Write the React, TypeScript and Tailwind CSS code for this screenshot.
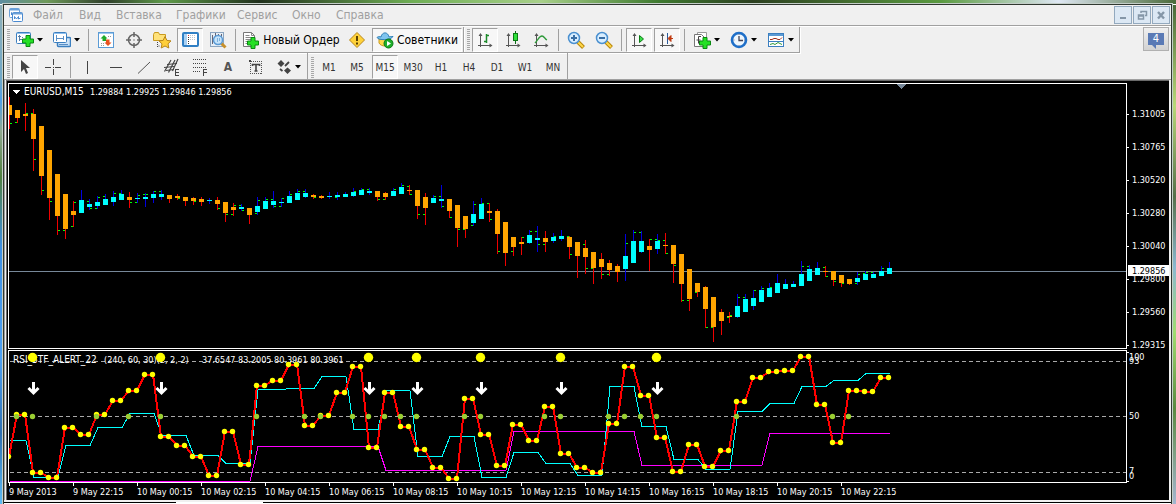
import type { ReactNode } from 'react';
import clsx from 'clsx';

const STEP = 8;

type Candle = {
  up: boolean;
  high: number;
  top: number;
  bottom: number;
  low: number;
  open?: number;
  close?: number;
};

// direction, high, body top, body bottom, low, open tick, close tick
const CANDLE_ROWS = `
d 13 21 31 45 - 39|d 26 26 34 39 38 -|d 19 30 32 47 - 29|d 25 30 55 87 29 75|d 42 42 92 111 - 106
d 66 66 114 136 - 117|d 90 90 132 151 - 146|d 110 110 145 155 146 -|d 117 127 131 143 142 118|u 106 116 129 129 - -
u 115 120 123 126 117 124|u 112 118 122 125 124 113|u 110 115 121 121 112 -|u 107 113 118 122 - 109|u 106 110 116 116 109 -
d 108 113 116 124 - 118|u 109 114 115 119 118 111|u 109 113 115 123 110 110|u 107 110 114 119 - 107|u 106 110 113 116 107 -
d 111 111 115 119 - -|d 110 112 114 116 - 114|d 113 113 117 122 - -|d 113 114 117 121 - 117|d 113 115 118 122 - -
u 114 116 117 120 - -|d 113 116 120 126 - 124|d 118 118 129 138 - 130|d 119 123 126 132 130 121|u 120 123 125 127 121 126
d 124 124 131 140 - -|u 113 122 128 131 129 116|u 113 117 125 125 - 115|u 107 117 121 124 115 122|u 114 118 119 123 122 114
u 107 112 119 119 - 110|u 105 109 116 116 - 107|u 105 109 113 114 107 -|d 110 111 113 115 - 113|d 111 112 114 115 - -
u 108 112 113 115 - -|u 108 111 113 116 113 -|u 108 110 113 113 - -|u 104 108 112 113 - 107|u 104 106 111 111 - 105
u 104 107 109 111 105 -|d 107 107 113 117 - 115|d 108 109 113 116 115 -|u 104 107 112 112 - 105|u 99 103 110 110 - 101
d 101 106 107 111 102 110|d 106 106 122 135 - 130|d 109 113 124 141 130 -|u 111 114 119 119 - 112|u 101 115 117 124 112 122
d 115 115 127 134 - 133|d 121 121 144 163 - 145|d 132 132 145 154 145 -|u 117 130 139 142 141 120|u 114 120 135 135 - 119
d 119 127 129 138 119 135|d 125 127 150 170 - 167|d 138 138 169 182 - -|d 153 153 163 172 167 -|d 153 158 160 171 - 153
u 146 151 159 160 - 147|u 142 154 156 168 147 160|d 147 154 158 168 160 -|u 149 153 157 159 - 152|u 146 152 155 157 - -
d 152 153 163 175 152 170|d 158 158 172 194 - -|d 156 164 173 190 160 184|d 168 168 184 200 184 -|d 169 175 183 195 - 190
d 176 179 186 192 190 -|d 180 182 188 198 - -|u 150 172 185 197 - 159|u 146 157 179 179 - 148|u 147 157 168 169 148 -
d 155 162 166 187 - 155|u 150 157 165 170 155 156|d 149 161 162 170 156 169|d 161 161 180 199 - 181|d 170 170 200 218 - 216
d 185 185 215 227 216 -|d 199 199 208 213 208 -|d 202 203 225 244 - 243|d 213 213 243 258 243 -|d 225 228 237 251 - -
d 228 232 233 239 233 231|u 210 222 233 234 - 213|u 210 215 228 228 213 -|u 206 214 222 226 - 206|u 202 206 218 218 - 204
u 199 204 213 213 - 203|u 190 199 209 209 - -|u 195 200 205 205 - -|u 197 200 203 203 - -|u 177 190 202 202 - 182
u 181 185 197 197 182 -|u 178 184 191 191 - -|d 182 187 188 193 183 192|d 187 187 196 202 - 197|d 191 191 199 203 - 199
d 195 195 200 201 - -|u 188 194 198 201 199 190|u 187 190 196 196 189 188|u 188 190 194 194 188 -|u 182 187 192 192 - 184
u 178 184 190 190 - -`;

const candles: Candle[] = CANDLE_ROWS.trim()
  .split(/[|\n]/)
  .map((row) => {
    const [dir, high, top, bottom, low, open, close] = row.trim().split(' ');
    return {
      up: dir === 'u',
      high: Number(high),
      top: Number(top),
      bottom: Number(bottom),
      low: Number(low),
      open: open === '-' ? undefined : Number(open),
      close: close === '-' ? undefined : Number(close),
    };
  });

// every fast value is held for two bars, slow ones for four and sixteen
const FAST = [
  63, 121, 126, 76, 83, 63, 49, 39, 23, 85, 94, 105, 124, 80, 113, 34, 29, 13, 74, 64, 41, 15, 96, 41, 75, 98, 116,
  127, 47, 83, 114, 73, 89, 55, 102, 116, 121, 72, 15, 44, 86, 120, 93, 115, 99, 50, 26, 20, 19, 5, 53, 91, 39, 40, 26,
];
const MEDIUM = [
  126, 94, 76, 62, 84, 104, 112, 38, 37, 25, 78, 39, 105, 85, 126, 101, 112, 124, 35, 75, 108, 118, 60, 52, 35, 29, 22,
];
const SLOW = [95, 119, 80, 114, 82];

const fast = [105, ...FAST.flatMap((v) => [v, v])];
const medium = [89, 89, 89, ...MEDIUM.flatMap((v) => Array<number>(4).fill(v))];
const slow = [...Array<number>(31).fill(130), ...SLOW.flatMap((v) => Array<number>(16).fill(v))];

const CROSSES = [1, 3, 11, 15, 19, 31, 37, 39, 43, 45, 47, 49, 51, 57, 59, 67, 69, 75, 77, 79, 81, 91, 103, 105];
const ALERTS = [3, 19, 45, 51, 59, 69, 81];

const PRICES = ['1.31005', '1.30765', '1.30520', '1.30280', '1.30040', '1.29800', '1.29560', '1.29315'];
const TIMES = [
  '9 May 2013',
  '9 May 22:15',
  '10 May 00:15',
  '10 May 02:15',
  '10 May 04:15',
  '10 May 06:15',
  '10 May 08:15',
  '10 May 10:15',
  '10 May 12:15',
  '10 May 14:15',
  '10 May 16:15',
  '10 May 18:15',
  '10 May 20:15',
  '10 May 22:15',
];

function points(values: number[], dx: number) {
  return values.map((v, i) => `${i * STEP + dx},${v + 0.5}`).join(' ');
}

function PricePlot() {
  return (
    <svg className="block h-[264px] w-full" shapeRendering="crispEdges" role="img" aria-label="EURUSD, M15">
      <rect x="0" y="187" width="100%" height="1" fill="#778899" />
      {candles.map((c, i) => {
        const x = i * STEP;
        return (
          <g key={i}>
            <rect x={x} y={c.high} width="1" height={c.low - c.high} fill={c.up ? '#0000e0' : '#f00000'} />
            {c.open !== undefined && <rect x={x - 2} y={c.open} width="2" height="1" fill="#00ff00" />}
            {c.close !== undefined && <rect x={x + 1} y={c.close} width="2" height="1" fill="#00ff00" />}
            <rect x={x - 2} y={c.top} width="5" height={c.bottom - c.top} fill={c.up ? '#00ffff' : '#ffa500'} />
          </g>
        );
      })}
      <path d="M888 0h9l-4 5h-1z" fill="#778899" />
      <path d="M3 6h8l-4 4z" fill="#fff" />
      <text x="15" y="11" fill="#fff" className="text-[10px]">
        EURUSD,M15
      </text>
      <text x="81" y="11" fill="#fff">
        1.29884 1.29925 1.29846 1.29856
      </text>
    </svg>
  );
}

function IndicatorPlot() {
  return (
    <svg className="block h-[131px] w-full" role="img" aria-label="RSI indicator">
      <g stroke="#a9a9a9" strokeDasharray="4 3" shapeRendering="crispEdges">
        <line x1="1" x2="100%" y1="10.5" y2="10.5" />
        <line x1="1" x2="100%" y1="65.5" y2="65.5" />
        <line x1="1" x2="100%" y1="121.5" y2="121.5" />
      </g>
      <g fill="#fff">
        <text x="4" y="12" className="text-[10px]">
          RSI_3TF_ALERT_22
        </text>
        <text x="95" y="12">
          (240, 60, 30)(2, 2, 2)
        </text>
        <text x="193" y="12">
          37.6547 83.2005 80.3961 80.3961
        </text>
      </g>
      <g fill="none" shapeRendering="crispEdges">
        <polyline points={points(slow, 1)} stroke="#ff00ff" />
        <polyline points={points(medium, 1)} stroke="#00ffff" />
        <polyline points={points(fast, 0)} stroke="#ff0000" strokeWidth="2" />
      </g>
      {fast.map((v, i) => (
        <circle key={i} cx={i * STEP - 0.5} cy={v + 0.5} r="2.7" fill="#ffff00" />
      ))}
      {CROSSES.map((i) => (
        <circle key={i} cx={i * STEP - 0.5} cy="65.5" r="2.7" fill="#9acd32" />
      ))}
      {ALERTS.map((i) => (
        <g key={i} transform={`translate(${i * STEP} 0)`}>
          <circle cx="-0.5" cy="6.5" r="4.7" fill="#ffff00" />
          <path d="M0.5 31v11M-4.5 37l5 5 5-5" fill="none" stroke="#fff" strokeWidth="3" />
        </g>
      ))}
    </svg>
  );
}

function PriceAxis() {
  return (
    <svg className="block h-[266px] w-[42px] shrink-0" fill="#fff">
      {PRICES.map((price, i) => (
        <g key={price}>
          <rect x="0" y={31 + i * 33} width="2" height="1" />
          <text x="5" y={34 + i * 33}>
            {price}
          </text>
        </g>
      ))}
      <rect x="1" y="182" width="41" height="11" />
      <text x="5" y="191" fill="#000">
        1.29856
      </text>
    </svg>
  );
}

function IndicatorAxis() {
  return (
    <svg className="block h-[133px] w-[42px] shrink-0" fill="#fff">
      <rect x="0" y="2" width="2" height="1" />
      <rect x="0" y="131" width="2" height="1" />
      <text x="2" y="10">100</text>
      <text x="2" y="14">93</text>
      <text x="2" y="69">50</text>
      <text x="2" y="124">7</text>
      <text x="2" y="129">0</text>
    </svg>
  );
}

function TimeAxis() {
  return (
    <svg className="block h-[17px] w-full" fill="#fff">
      {TIMES.map((time, i) => (
        <g key={time}>
          <rect x={1 + i * 64} y="0" width="1" height="3" />
          <text x={i * 64 + 1} y="12">
            {time}
          </text>
        </g>
      ))}
    </svg>
  );
}

function Chart() {
  return (
    <div className="border-t border-l border-[#696969] bg-black pt-[2px] pl-px font-['DejaVu_Sans_Condensed','DejaVu_Sans',sans-serif] text-[9px] [font-stretch:condensed]">
      <div className="flex">
        <div className="min-w-0 flex-1 border border-white">
          <PricePlot />
        </div>
        <PriceAxis />
      </div>
      <div className="mt-px flex">
        <div className="min-w-0 flex-1 border border-white">
          <IndicatorPlot />
        </div>
        <IndicatorAxis />
      </div>
      <TimeAxis />
    </div>
  );
}

function Icon({ children, width = 18 }: { children: ReactNode; width?: number }) {
  return (
    <svg width={width} height="18" viewBox={`0 0 ${width} 18`} className="shrink-0" fill="none" aria-hidden="true">
      {children}
    </svg>
  );
}

function Plus({ x, y }: { x: number; y: number }) {
  return (
    <path
      transform={`translate(${x} ${y})`}
      d="M4 .5h4V4h3.500v4H8v3.500H4V8H.5V4H4z"
      fill="#25e025"
      stroke="#0b8a12"
    />
  );
}

function Magnifier({ plus }: { plus: boolean }) {
  return (
    <Icon>
      <path d="M11 11l5.500 5.500" stroke="#b8860b" strokeWidth="4" />
      <path d="M11 11l5 5" stroke="#ffd84a" strokeWidth="2" />
      <circle cx="7" cy="7" r="5.500" fill="#d9eeff" stroke="#4a90d0" strokeWidth="1.500" />
      <path d={plus ? 'M4 7h6M7 4v6' : 'M4 7h6'} stroke="#3a6fa5" strokeWidth="2" />
    </Icon>
  );
}

// axes shared by the chart type and the scroll icons
function Axes({ children }: { children: ReactNode }) {
  return (
    <Icon>
      <path d="M4.500 3v13M2 14.500h13" stroke="#555" />
      <path d="M4.500 2l2 3h-4zM16.500 14.500l-3-2v4z" fill="#555" />
      {children}
    </Icon>
  );
}

const icons = {
  newChart: (
    <Icon>
      <rect x=".5" y="1.500" width="14" height="11" rx="1" fill="#fff" stroke="#3b7fc0" />
      <path d="M1 2.500h13" stroke="#8fc0ee" />
      <path d="M3.500 4v6M2 5.500h3M3 8.500h4M6 6.500h1" stroke="#5a7fa5" />
      <Plus x={6} y={4} />
    </Icon>
  ),
  profiles: (
    <Icon>
      <rect x="4.500" y="6.500" width="13" height="9" rx="1" fill="#cfe4f8" stroke="#3b7fc0" strokeWidth="1.500" />
      <rect x=".5" y="1.500" width="13" height="10" rx="1" fill="#fff" stroke="#3b7fc0" />
      <path d="M1 2.500h12" stroke="#8fc0ee" />
      <path d="M3.500 4v6M10.500 5v4M3 7.500h8M6 13.500h9" stroke="#5a8fc5" />
    </Icon>
  ),
  market: (
    <Icon>
      <rect x="1.500" y="1.500" width="15" height="15" fill="#fff" stroke="#5b9bd5" />
      <path d="M2 2.500h14" stroke="#9cc8ee" />
      <path d="M7 4l3.500 3.500H9V10H5.500V7.500H3.500z" fill="#1faa2a" />
      <path d="M11 15l-3.500-3.500H9V8.500h3.500v3h2z" fill="#e8531f" />
      <path d="M11 5.500h1m1 0h1M4 12.500h1m1 0h1M4 14.500h1m1 0h1" stroke="#999" />
    </Icon>
  ),
  crosshair: (
    <Icon>
      <circle cx="9" cy="9" r="5.500" stroke="#666" strokeWidth="1.500" />
      <path d="M9 1v5M9 12v5M1 9h5M12 9h5" stroke="#666" strokeWidth="1.500" />
      <path d="M8 9h2" stroke="#888" />
    </Icon>
  ),
  favorites: (
    <Icon width={20}>
      <path d="M1.500 3.500l1-2h4l1 2h6v6h-12z" fill="#ffe27a" stroke="#c99a20" />
      <path d="M5.500 11v1m0 1v1m0 1v1m1-1h1" stroke="#444" />
      <path
        d="M13 5.500l1.900 3.900 4.100.5-3 2.900.8 4.200-3.800-2-3.800 2 .8-4.200-3-2.900 4.100-.5z"
        fill="#ffcf3a"
        stroke="#b8861a"
      />
    </Icon>
  ),
  navigator: (
    <Icon>
      <rect x="2" y="2" width="15" height="13" rx="1" fill="#fff" stroke="#2f7fc4" strokeWidth="2" />
      <rect x="3" y="3" width="3" height="11" fill="#a9d0f2" />
      <path d="M7.500 4v10" stroke="#333" strokeDasharray="1 1" />
      <path d="M9 4.500h6M9 6.500h6M9 8.500h6" stroke="#b8c4d0" strokeDasharray="1 1" />
      <path d="M7 4.500h1" stroke="#e03030" />
    </Icon>
  ),
  tester: (
    <Icon>
      <rect x="1.500" y="1.500" width="13" height="14" fill="#e6eef6" stroke="#8aa5c0" />
      <path d="M3.500 4v9M6.500 2v5M9.500 3v4M12.500 3v6" stroke="#667" />
      <path d="M12 12l4.500 4.500" stroke="#c8902a" strokeWidth="3" />
      <circle cx="9" cy="9" r="4.500" fill="#c6e4fb" stroke="#5b9bd5" strokeWidth="1.500" />
      <path d="M8.500 7v4M10.500 7v3" stroke="#7ab0dd" />
    </Icon>
  ),
  order: (
    <Icon>
      <path d="M1.500 1.500h8l3 3v11h-11z" fill="#fff" stroke="#777" />
      <path d="M9.500 1.500v3h3M3.500 4.500h4M3.500 6.500h7M3.500 8.500h7M3.500 10.500h4M3.500 12.500h3" stroke="#888" />
      <Plus x={5} y={6} />
    </Icon>
  ),
  warning: (
    <Icon>
      <path d="M9 1.500L16.500 9 9 16.500 1.500 9z" fill="#ffd23a" stroke="#b8861a" strokeLinejoin="round" />
      <path d="M9 5v5M9 11.500v2" stroke="#5a4000" strokeWidth="2" />
    </Icon>
  ),
  advisors: (
    <Icon>
      <path d="M3 8h11v4c-1 4-9 4-11 0z" fill="#ffd84a" stroke="#c99a20" />
      <path d="M1 6.500C2 9.500 15 9.500 17 5.500c-2 0-3 0-4 .5-1-5.500-7-5.500-8 0-1-.5-3-.5-4 .5z" fill="#7fc4ee" stroke="#2f80b8" />
      <circle cx="12.500" cy="12.500" r="4.500" fill="#1fae2a" stroke="#0b7a14" />
      <path d="M11 10l4 2.500-4 2.500z" fill="#fff" />
    </Icon>
  ),
  bars: (
    <Axes>
      <path d="M10.500 3v9M8 10.500h2M11 4.500h2" stroke="#1c8a2a" strokeWidth="1.500" />
    </Axes>
  ),
  candles: (
    <Axes>
      <path d="M11.500 0v13" stroke="#0b6a14" />
      <rect x="9.500" y="2.500" width="4" height="7" fill="#2ee03a" stroke="#0b7a14" />
    </Axes>
  ),
  line: (
    <Axes>
      <path d="M3 12c3-3 4-7 7-7 2 0 3 3 5 4" stroke="#2f9a3a" strokeWidth="1.300" />
    </Axes>
  ),
  autoscroll: (
    <Axes>
      <path d="M9.500 4.500l4 3.500-4 3.500z" fill="#3ade4a" stroke="#0b7a14" />
    </Axes>
  ),
  shift: (
    <Axes>
      <path d="M9.500 2v11" stroke="#2a5a9a" />
      <path d="M10 7.500l3-3v6zM12 7.500h3" fill="#c03a10" stroke="#c03a10" />
    </Axes>
  ),
  indicators: (
    <Icon>
      <path d="M4.500 1.500h9v11h-9z" fill="#fff" stroke="#999" />
      <path d="M1.500 3.500h7l3 3v9h-10z" fill="#fff" stroke="#777" />
      <path d="M8 5.500H5.500v7M3.500 9h4" stroke="#444" />
      <Plus x={6} y={6} />
    </Icon>
  ),
  clock: (
    <Icon>
      <circle cx="9" cy="9" r="7" fill="#eef6fd" stroke="#1f6fc8" strokeWidth="2.600" />
      <path d="M9 5v4.500h4" stroke="#445" strokeWidth="1.300" />
      <path d="M9 3v1M9 14v1M3.500 9h1M14 9h1" stroke="#889" />
    </Icon>
  ),
  template: (
    <Icon>
      <rect x="1.500" y="2.500" width="15" height="13" fill="#fff" stroke="#3b7fc0" />
      <rect x="2" y="3" width="14" height="2" fill="#5b9bd5" />
      <path d="M3 8.500h2l2-1h2l2 1h2l2-2" stroke="#a03020" />
      <path d="M3 13.500l3-1 2 1 3-2 2 1 2 1" stroke="#2f9a3a" />
      <path d="M2 10.500h14" stroke="#3b7fc0" />
    </Icon>
  ),
  cursor: (
    <Icon>
      <path d="M5 2v12l3-3 2 5 2-1-2-5h4z" fill="#444" />
    </Icon>
  ),
  cross: (
    <Icon>
      <path d="M9.500 1v6m0 4v6M1 9.500h6m4 0h6M9 9.500h1" stroke="#444" shapeRendering="crispEdges" />
    </Icon>
  ),
  vertical: (
    <Icon>
      <path d="M8.500 3v13" stroke="#444" shapeRendering="crispEdges" />
    </Icon>
  ),
  horizontal: (
    <Icon>
      <path d="M3 9.500h12" stroke="#444" shapeRendering="crispEdges" />
    </Icon>
  ),
  trend: (
    <Icon>
      <path d="M3 15.500L15 4" stroke="#555" />
    </Icon>
  ),
  channel: (
    <Icon>
      <path d="M1.500 13.500L8 2M5.500 14.500L12 2M9.500 13L15 1" stroke="#444" strokeWidth="1.200" />
      <path d="M1 9.500l10-1M3 12.500l8-1M4 6.500l10-1" stroke="#444" />
      <path d="M16 11.500h-3.500v6H16M12.500 14.500H16" stroke="#444" shapeRendering="crispEdges" />
    </Icon>
  ),
  fibonacci: (
    <Icon>
      <path d="M2 1.500h14M2 5.500h14M2 9.500h14M2 13.500h8" stroke="#444" strokeDasharray="1 1" shapeRendering="crispEdges" />
      <path d="M16 11.500h-3.500V18M12.500 14.500H16" stroke="#444" shapeRendering="crispEdges" />
    </Icon>
  ),
  label: (
    <Icon>
      <rect x="3.500" y="3.500" width="11" height="12" stroke="#555" strokeDasharray="1 1" shapeRendering="crispEdges" />
      <path d="M5.500 8V6.500h7V8M9 6v7M7.500 13h3" stroke="#444" strokeWidth="1.600" />
      <rect x="2" y="2" width="2" height="2" fill="#444" />
    </Icon>
  ),
  arrows: (
    <Icon width={16}>
      <path d="M5 2l3.500 3.500L5 9 1.500 5.500zM11.500 16l-3.500-3.500 3.500-3 3.500 3z" fill="#444" />
      <path d="M4 11l2.500 2M9 8l4-4" stroke="#444" strokeWidth="1.800" />
    </Icon>
  ),
};

function Caret() {
  return (
    <svg width="6" height="4" viewBox="0 0 6 4" className="shrink-0" fill="#000" aria-hidden="true">
      <path d="M0 0h6L3 3.500z" />
    </svg>
  );
}

type ToolProps = {
  label: string;
  children: ReactNode;
  pressed?: boolean;
  menu?: boolean;
  className?: string;
};

function Tool({ label, children, pressed, menu, className }: ToolProps) {
  return (
    <button
      type="button"
      aria-label={label}
      aria-pressed={pressed}
      className={clsx(
        'flex h-6 shrink-0 items-center justify-center gap-[3px]',
        className ?? (menu ? 'w-[35px]' : 'w-[26px]'),
        pressed ? 'border border-t-[#a0a0a0] border-r-white border-b-white border-l-[#a0a0a0] bg-[#f7f7f7]' : '',
      )}
    >
      {children}
      {menu && <Caret />}
    </button>
  );
}

function Separator() {
  return <div className="mx-[2px] h-[22px] w-px shrink-0 bg-[#a0a0a0]" />;
}

function Grip() {
  return (
    <div className="flex h-[21px] w-[6px] shrink-0 justify-end">
      <div className="w-[3px] bg-[repeating-linear-gradient(#a8a8a8_0_1px,#f0f0f0_1px_2px)]" />
    </div>
  );
}

function ToolGroup({ label, last, children }: { label: string; last?: boolean; children: ReactNode }) {
  return (
    <div
      role="toolbar"
      aria-label={label}
      className={clsx(
        'flex h-[26px] items-center gap-[2px] border-r border-[#a0a0a0] pr-px',
        last ? 'pt-[2px]' : 'border-b shadow-[1px_1px_0_#fff]',
      )}
    >
      <Grip />
      {children}
    </div>
  );
}

const MENU = [
  { name: 'Файл', width: 'w-[46px]' },
  { name: 'Вид', width: 'w-[37px]' },
  { name: 'Вставка', width: 'w-[60px]' },
  { name: 'Графики', width: 'w-[61px]' },
  { name: 'Сервис', width: 'w-[55px]' },
  { name: 'Окно', width: 'w-[44px]' },
  { name: 'Справка', width: 'w-[60px]' },
];

function MenuBar() {
  return (
    <div className="flex h-[21px] items-center border-b border-[#a0a0a0]">
      <svg width="16" height="16" viewBox="0 0 16 16" className="ml-1 shrink-0" fill="none" aria-hidden="true">
        <rect x="1.500" y="1.500" width="10" height="9" rx="1" fill="#fff" stroke="#6aa0d8" />
        <path d="M2 2.500h9" stroke="#6aa0d8" strokeWidth="2" />
        <path d="M3.500 8V5.500l2 2 1.500-2" stroke="#4a8ad0" />
        <rect x="4.500" y="5.500" width="10" height="9" rx="1" fill="#fff" stroke="#4a8ad0" />
        <path d="M5 6.500h9" stroke="#6aa0d8" strokeWidth="2" />
        <path d="M6.500 12V9.500l2 2.500 2-2.500V12l2-1" stroke="#4a8ad0" />
      </svg>
      <nav className="ml-[9px] flex text-[12px] leading-[18px] text-[#a0a0a0]">
        {MENU.map((item) => (
          <button key={item.name} type="button" className={clsx('text-left', item.width)}>
            {item.name}
          </button>
        ))}
      </nav>
      <div className="mr-px ml-auto flex gap-px">
        <WindowButton label="Minimize">
          <path d="M5 10h6v2H5z" fill="#8597a8" />
        </WindowButton>
        <WindowButton label="Restore">
          <path d="M7 6V4.500h5.500v4H11M4.500 8h5v4h-5zM4.500 9h5" stroke="#8597a8" strokeWidth="1.500" />
        </WindowButton>
        <WindowButton label="Close">
          <path d="M5 5l6 6.500M11 5l-6 6.500" stroke="#8597a8" strokeWidth="2.400" />
        </WindowButton>
      </div>
    </div>
  );
}

function WindowButton({ label, children }: { label: string; children: ReactNode }) {
  return (
    <button type="button" aria-label={label} className="h-[18px] w-[18px] border border-[#93a9be] bg-[#dce8f4]">
      <svg width="16" height="16" viewBox="0 0 16 16" fill="none" aria-hidden="true">
        {children}
      </svg>
    </button>
  );
}

const PERIODS = ['M1', 'M5', 'M15', 'M30', 'H1', 'H4', 'D1', 'W1', 'MN'];

function Toolbars() {
  return (
    <div className="flex border-t border-b border-t-white border-b-[#a0a0a0]">
      <div className="min-w-0 flex-1">
        <div className="flex">
          <ToolGroup label="Стандартная">
            <Tool label="Новый график" menu>{icons.newChart}</Tool>
            <Tool label="Профили" menu>{icons.profiles}</Tool>
            <Separator />
            <Tool label="Обзор рынка">{icons.market}</Tool>
            <Tool label="Окно данных">{icons.crosshair}</Tool>
            <Tool label="Навигатор">{icons.favorites}</Tool>
            <Tool label="Терминал" pressed>{icons.navigator}</Tool>
            <Tool label="Тестер стратегий">{icons.tester}</Tool>
            <Separator />
            <Tool label="Новый Ордер" className="w-[102px]">
              {icons.order}
              <span className="text-[12px] whitespace-nowrap">Новый Ордер</span>
            </Tool>
            <Tool label="MetaEditor">{icons.warning}</Tool>
            <Tool label="Советники" pressed className="w-[90px]">
              {icons.advisors}
              <span className="text-[12px]">Советники</span>
            </Tool>
          </ToolGroup>
          <ToolGroup label="Графики">
            <Tool label="Бары" pressed>{icons.bars}</Tool>
            <Tool label="Свечи">{icons.candles}</Tool>
            <Tool label="Линия">{icons.line}</Tool>
            <Separator />
            <Tool label="Увеличить"><Magnifier plus /></Tool>
            <Tool label="Уменьшить"><Magnifier plus={false} /></Tool>
            <Separator />
            <Tool label="Автопрокрутка" pressed>{icons.autoscroll}</Tool>
            <Tool label="Сдвиг графика" pressed>{icons.shift}</Tool>
            <Separator />
            <Tool label="Индикаторы" menu>{icons.indicators}</Tool>
            <Tool label="Периоды" menu>{icons.clock}</Tool>
            <Tool label="Шаблоны" menu>{icons.template}</Tool>
          </ToolGroup>
        </div>
        <div className="flex">
          <ToolGroup label="Графические инструменты" last>
            <Tool label="Курсор" pressed>{icons.cursor}</Tool>
            <Tool label="Перекрестие">{icons.cross}</Tool>
            <Separator />
            <Tool label="Вертикальная линия">{icons.vertical}</Tool>
            <Tool label="Горизонтальная линия">{icons.horizontal}</Tool>
            <Tool label="Трендовая линия">{icons.trend}</Tool>
            <Tool label="Канал">{icons.channel}</Tool>
            <Tool label="Фибоначчи">{icons.fibonacci}</Tool>
            <Tool label="Текст">
              <span className="text-[12px] font-bold text-[#555]">A</span>
            </Tool>
            <Tool label="Текстовая метка">{icons.label}</Tool>
            <Tool label="Стрелки" menu>{icons.arrows}</Tool>
          </ToolGroup>
          <ToolGroup label="Периоды" last>
            {PERIODS.map((period) => (
              <Tool key={period} label={period} pressed={period === 'M15'}>
                <span className="text-[10px] text-[#333]">{period}</span>
              </Tool>
            ))}
          </ToolGroup>
        </div>
      </div>
      <button
        type="button"
        aria-label="Сообщения"
        className="mr-[2px] flex h-6 w-[26px] items-center justify-center border border-[#b0b0b0] bg-linear-to-b from-[#f0f0f0] to-[#d2d2d2]"
      >
        <span className="relative flex h-3 w-4 items-center justify-center bg-[#5a7ab5] text-[11px] leading-3 text-white">
          4
          <span className="absolute top-3 left-1 border-t-4 border-l-4 border-t-[#5a7ab5] border-l-transparent" />
        </span>
      </button>
    </div>
  );
}

export default function App() {
  return (
    <div className="min-h-screen bg-[linear-gradient(90deg,#5f8fa0,#6f9a5a_4%,#2f3f2a_9%,#5f9a4a_14%,#20301c_22%,#6fae55_35%,#a8d08a_46%,#3f7a30_56%,#2c4020_64%,#5a9a40_80%,#dfe8f4_90%,#4a6a3a)] bg-[length:100%_4px] bg-no-repeat">
      <div className="min-h-screen bg-[linear-gradient(#8fb0b8,#6fa8c8_15%,#4f9fe8_19%,#8fa890_25%,#4f7f40_34%,#3f8fe0_48%,#4fa0f0_70%,#2f70b0_85%,#60c0f8)] bg-[length:3px_100%] bg-[position:0_5px] bg-no-repeat">
        <div className="flex min-h-screen flex-col bg-[linear-gradient(#4a6a3a,#b8d878_20%,#55704a_38%,#8ab8d0_52%,#9fdc70_65%,#5a8a40_80%,#a8b8d8)] bg-[length:4px_100%] bg-[position:right_5px] bg-no-repeat pt-[3px] pr-[3px] pl-[2px]">
          <div className="flex flex-1 flex-col border border-b-0 border-[#c4cec8] font-['DejaVu_Sans_Condensed','DejaVu_Sans',sans-serif] text-black [font-stretch:condensed]">
            <div className="flex flex-1 flex-col border border-b-0 border-[#303830] bg-[#f0f0f0]">
              <MenuBar />
              <Toolbars />
              <div className="border-l border-[#a0a0a0] pr-[2px] pl-px">
                <Chart />
              </div>
              <div className="mt-[2px] flex h-[2px] bg-white">
                <div className="w-[172px] border-t border-black" />
                <div className="ml-[87px] flex-1 border-t border-black" />
              </div>
            </div>
          </div>
        </div>
      </div>
    </div>
  );
}
